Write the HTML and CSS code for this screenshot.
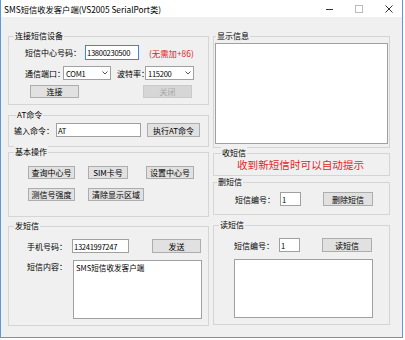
FILE: index.html
```html
<!DOCTYPE html>
<html lang="zh-CN">
<head>
  <meta charset="UTF-8" />
  <title>SMS短信收发客户端</title>
  <link rel="stylesheet" href="styles.css">
</head>
<body>
  <div class="window">
    <div class="titlebar">
      <span class="title">SMS短信收发客户端(VS2005 SerialPort类)</span>
      <svg class="ctl ctl-min" width="7" height="8" viewBox="0 0 7 8"><path d="M0 4.5h7" stroke="#333" stroke-width="1"/></svg>
      <svg class="ctl ctl-max" width="8" height="8" viewBox="0 0 8 8"><rect x="0.5" y="0.5" width="7" height="7" fill="none" stroke="#bbb"/></svg>
      <svg class="ctl ctl-close" width="8" height="8" viewBox="0 0 8 8"><path d="M0.5 0.5l7 7M7.5 0.5l-7 7" stroke="#333" stroke-width="1"/></svg>
    </div>

    <div class="client">
      <div class="col col-left">
        <div class="group g-connect">
          <div class="group-title">连接短信设备</div>
          <div class="row row-center">
            <span class="label w60">短信中心号码：</span>
            <div class="textbox focused w54">13800230500</div>
            <span class="hint">(无需加+86)</span>
          </div>
          <div class="row row-port">
            <span class="label w38">通信端口：</span>
            <div class="combo w48">COM1<svg class="chev" width="6" height="4" viewBox="0 0 6 4"><path d="M0.5 0.5l2.5 2.5 2.5-2.5" fill="none" stroke="#555"/></svg></div>
            <span class="label w28 ml6">波特率：</span>
            <div class="combo w49">115200<svg class="chev" width="6" height="4" viewBox="0 0 6 4"><path d="M0.5 0.5l2.5 2.5 2.5-2.5" fill="none" stroke="#555"/></svg></div>
          </div>
          <div class="row row-btns">
            <div class="button w49 ml5">连接</div>
            <div class="button disabled w49 ml64">关闭</div>
          </div>
        </div>

        <div class="group g-at">
          <div class="group-title">AT命令</div>
          <div class="row row-at">
            <span class="label w42">输入命令：</span>
            <div class="textbox w85">AT</div>
            <div class="button w53 ml6">执行AT命令</div>
          </div>
        </div>

        <div class="group g-basic">
          <div class="group-title">基本操作</div>
          <div class="row row-ops1">
            <div class="button w47">查询中心号</div>
            <div class="button w40 ml13">SIM卡号</div>
            <div class="button w48 ml18">设置中心号</div>
          </div>
          <div class="row row-ops2">
            <div class="button w47">测信号强度</div>
            <div class="button w56 ml13">清除显示区域</div>
          </div>
        </div>

        <div class="group g-send">
          <div class="group-title">发短信</div>
          <div class="row row-phone">
            <span class="label w45">手机号码：</span>
            <div class="textbox w57">13241997247</div>
            <div class="button w49 ml23">发送</div>
          </div>
          <div class="row row-content">
            <span class="label w46">短信内容：</span>
            <div class="textarea send-area">SMS短信收发客户端</div>
          </div>
        </div>
      </div>

      <div class="col col-right">
        <div class="group g-display">
          <div class="group-title">显示信息</div>
          <div class="textarea display-area"></div>
        </div>

        <div class="group g-recv">
          <div class="group-title">收短信</div>
          <div class="notice">收到新短信时可以自动提示</div>
        </div>

        <div class="group g-del">
          <div class="group-title">删短信</div>
          <div class="row row-num">
            <span class="label w45">短信编号：</span>
            <div class="textbox w21">1</div>
            <div class="button w50 ml22">删除短信</div>
          </div>
        </div>

        <div class="group g-read">
          <div class="group-title">读短信</div>
          <div class="row row-num2">
            <span class="label w45">短信编号：</span>
            <div class="textbox w21">1</div>
            <div class="button w50 ml22">读短信</div>
          </div>
          <div class="textarea read-area"></div>
        </div>
      </div>
    </div>
  </div>
</body>
</html>
```

FILE: styles.css
```css
body {
  margin: 0;
  background-color: #ffffff;
  font-family: "Noto Sans CJK SC", "Noto Sans", sans-serif;
  font-size: 8px;
  color: #000;
}
.window {
  width: 401px;
  height: 337px;
  border: 1px solid #5b9bd5;
  border-top: none;
  background-color: #f0f0f0;
  display: flex;
  flex-direction: column;
}
.titlebar {
  height: 17px;
  background-color: #fff;
  display: flex;
  align-items: center;
  padding-left: 3px;
}
.title {
  flex: 1;
  font-size: 8.3px;
  line-height: 12px;
}
.ctl-min {
  margin-right: 22px;
}
.ctl-max {
  margin-right: 22px;
  margin-top: 1px;
}
.ctl-close {
  margin-right: 9px;
  margin-top: 1px;
}
.client {
  flex: 1;
  display: flex;
  padding-left: 7px;
  gap: 4px;
}
.col {
  display: flex;
  flex-direction: column;
}
.col-left {
  width: 201px;
}
.col-right {
  width: 177px;
}
.group {
  border: 1px solid #d5d5d5;
  display: flex;
  flex-direction: column;
}
.group-title {
  align-self: flex-start;
  margin: -7px 0 0 5px;
  padding: 0 1px;
  line-height: 12px;
  background-color: #f0f0f0;
}
.row {
  display: flex;
  align-items: center;
}
.label {
  flex-shrink: 0;
  white-space: nowrap;
}
.textbox, .combo, .textarea {
  box-sizing: border-box;
  background-color: #fff;
  border: 1px solid #a0a0a0;
  white-space: nowrap;
}
.textbox {
  height: 100%;
  padding-left: 1px;
  display: flex;
  align-items: center;
  font-size: 7.6px;
  letter-spacing: -0.3px;
}
.textbox.focused {
  border-color: #3b86d6;
}
.combo {
  height: 100%;
  padding: 0 2px;
  display: flex;
  align-items: center;
  justify-content: space-between;
  font-size: 7.6px;
  letter-spacing: -0.3px;
}
.textarea {
  padding: 1px 2px;
}
.button {
  box-sizing: border-box;
  height: 100%;
  background-color: #e1e1e1;
  border: 1px solid #adadad;
  display: flex;
  align-items: center;
  justify-content: center;
  white-space: nowrap;
}
.button.disabled {
  background-color: #d6d6d6;
  border-color: #cacaca;
  color: #a6a6a6;
}
.hint {
  margin-left: 10px;
  font-size: 8.4px;
  color: #e0242a;
}
.notice {
  margin: 0 0 0 23px;
  font-size: 10.6px;
  line-height: 11px;
  color: #e3262b;
}

/* connect group */
.g-connect {
  margin-top: 19px;
  padding-bottom: 6px;
}
.g-connect .row {
  padding-left: 16px;
}
.row-center {
  height: 15px;
  margin-top: 3px;
}
.row-port {
  height: 14px;
  margin-top: 6px;
}
.row-btns {
  height: 13px;
  margin-top: 5px;
}

/* AT group */
.g-at {
  margin-top: 10px;
  padding-bottom: 9px;
}
.g-at .row {
  padding-left: 5px;
}
.g-at .group-title {
  margin-left: 7px;
}
.row-at {
  height: 14px;
  margin-top: 2px;
}

/* basic operations */
.g-basic {
  margin-top: 5px;
  padding-bottom: 15px;
}
.g-basic .row {
  padding-left: 19px;
}
.row-ops1 {
  height: 13px;
  margin-top: 8px;
}
.row-ops2 {
  height: 13px;
  margin-top: 9px;
}

/* send group */
.g-send {
  margin-top: 9px;
  padding-bottom: 6px;
}
.g-send .row {
  padding-left: 18px;
}
.row-phone {
  height: 14px;
  margin-top: 7px;
}
.row-content {
  align-items: flex-start;
  margin-top: 7px;
}
.row-content .label {
  margin-top: 1px;
}
.send-area {
  width: 129px;
  height: 59px;
  font-size: 7.6px;
}

/* right column */
.g-display {
  margin-top: 19px;
  padding-bottom: 3px;
}
.g-display .group-title {
  margin-left: 2px;
}
.display-area {
  width: 173px;
  height: 101px;
  margin: 1px 0 0 1px;
}
.g-recv {
  margin-top: 5px;
  padding-bottom: 5px;
}
.g-recv .group-title {
  margin-left: 7px;
}
.g-del {
  margin-top: 6px;
  padding-bottom: 8px;
}
.g-del .group-title {
  margin-left: 3px;
}
.g-del .row {
  padding-left: 21px;
}
.row-num {
  height: 14px;
  margin-top: 4px;
}
.g-read {
  margin-top: 10px;
  padding-bottom: 6px;
}
.g-read .group-title {
  margin-left: 5px;
}
.g-read .row {
  padding-left: 20px;
}
.row-num2 {
  height: 14px;
  margin-top: 7px;
}
.read-area {
  width: 139px;
  height: 59px;
  margin: 7px 0 0 20px;
}

.w21 { width: 21px; }
.w28 { width: 28px; }
.w38 { width: 38px; }
.w40 { width: 40px; }
.w42 { width: 42px; }
.w45 { width: 45px; }
.w46 { width: 46px; }
.w47 { width: 47px; }
.w48 { width: 48px; }
.w49 { width: 49px; }
.w50 { width: 50px; }
.w53 { width: 53px; }
.w54 { width: 54px; }
.w56 { width: 56px; }
.w57 { width: 57px; }
.w60 { width: 60px; }
.w85 { width: 85px; }
.ml5 { margin-left: 5px; }
.ml6 { margin-left: 6px; }
.ml13 { margin-left: 13px; }
.ml18 { margin-left: 18px; }
.ml22 { margin-left: 22px; }
.ml23 { margin-left: 23px; }
.ml64 { margin-left: 64px; }
```
